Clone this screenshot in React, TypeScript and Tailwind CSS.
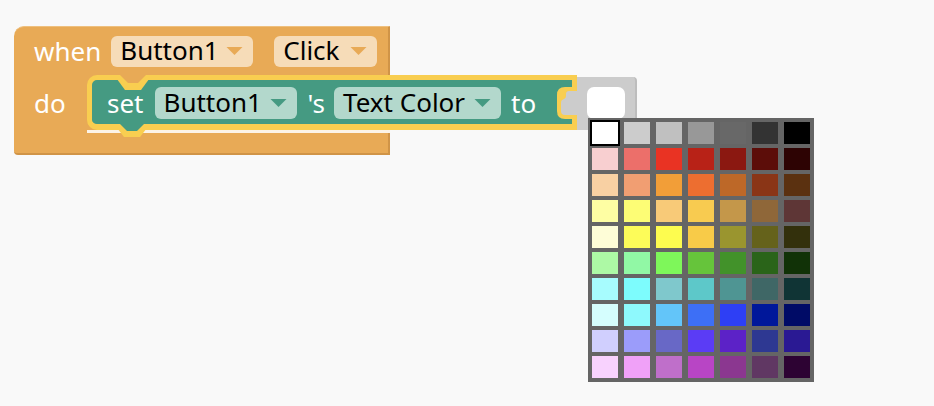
import React from "react";

const ORANGE = "#e8aa56";
const GREEN = "#459a82";

const PALETTE: string[][] = [
  ["#ffffff", "#cccccc", "#c0c0c0", "#989898", "#686868", "#333333", "#000000"],
  ["#f8cfd0", "#ec6f6a", "#e93323", "#b82217", "#8b1811", "#5c0d09", "#2d0303"],
  ["#f8d0a3", "#f19e72", "#f29e38", "#ed6e30", "#bd6828", "#8a3516", "#5b3110"],
  ["#fefea3", "#fdfd75", "#f8ca78", "#f8cb50", "#c4974a", "#8f6739", "#5e3636"],
  ["#fefdd7", "#fdfc59", "#fdfc4f", "#f8cb48", "#9a952f", "#65621b", "#33300c"],
  ["#adf9a5", "#91f8a5", "#7ef75a", "#66c43b", "#42922a", "#2a6419", "#113207"],
  ["#a7fcfe", "#7dfcfd", "#7fc8cc", "#5dc8c9", "#4f9593", "#3f6766", "#103435"],
  ["#d5fefe", "#8ef9fd", "#63c5f9", "#3d6ff6", "#2e3ff5", "#00179a", "#000b66"],
  ["#d0cffe", "#9b9cfa", "#6868c6", "#5b3cf5", "#5c22c7", "#2e3892", "#2a1993"],
  ["#f8d2fe", "#f0a1f8", "#bf6fca", "#b845c5", "#8b3790", "#603763", "#2d0333"],
];

function Arrow({ color }: { color: string }) {
  return (
    <svg width="17" height="8" viewBox="0 0 17 8" className="shrink-0">
      <path d="M0.5 0 H16.5 L8.5 8 Z" fill={color} />
    </svg>
  );
}

interface FieldProps {
  label: string;
  width: string;
  tone: "orange" | "green";
  className?: string;
}

function Field({ label, width, tone, className = "" }: FieldProps) {
  const look = tone === "orange" ? "bg-[#f6dcb8] h-[31px]" : "bg-[#b3d8cc] h-[32px]";
  return (
    <div
      className={`flex items-center shrink-0 pl-[9px] pr-[10px] pb-[2px] rounded-[6px] text-black ${look} ${width} ${className}`}
    >
      <span>{label}</span>
      <span className="ml-auto pt-[2px]">
        <Arrow color={tone === "orange" ? ORANGE : GREEN} />
      </span>
    </div>
  );
}

function SetBlock() {
  return (
    <div className="relative w-[490px] h-[55px] bg-[#459a82] border-[5px] border-b-[6px] border-[#f9ce50] rounded-l-[10px] flex items-center pl-[15px] pt-[2px] text-white">
      <span className="mr-[11px]">set</span>
      <Field label="Button1" width="w-[142px]" tone="green" className="mr-[11px]" />
      <span className="mr-[9px]">'s</span>
      <Field label="Text Color" width="w-[167px]" tone="green" className="mr-[10px]" />
      <span>to</span>

      {/* previous-connection notch */}
      <svg width="40" height="15" viewBox="0 0 40 15" className="absolute left-[21px] top-[-5px]">
        <path d="M1 0 H39 L28 15 H12 Z" fill="#f9ce50" />
        <path d="M7 0 H33 L25 8 H15 Z" fill={ORANGE} />
      </svg>

      {/* next-connection tab */}
      <svg width="36" height="14" viewBox="0 0 36 14" className="absolute left-[22px] top-[44px]">
        <path d="M0 0 H36 L26 13 H10 Z" fill="#f9ce50" />
        <path d="M6 0 H30 L23 7 H13 Z" fill={GREEN} />
      </svg>

      {/* value socket */}
      <svg width="24" height="36" viewBox="0 0 24 36" className="absolute left-[463px] top-[5px] overflow-visible">
        <path d="M24 2 H10 Q2 2 2 10 V26 Q2 34 10 34 H24 Z" fill="#f9ce50" />
        <path d="M24 6 H14 Q11 6 11 9 V11 C11 15 6 13 6 18 V26 Q6 30 10 30 H24 Z" fill="#cccccc" />
      </svg>
    </div>
  );
}

function EventBlock() {
  return (
    <div className="absolute left-[14px] top-[26px] text-white">
      <div className="flex items-center w-[376px] h-[49px] pl-[20px] bg-[#e8aa56] rounded-tl-[10px] border-t border-t-[#efc07e] border-r-2 border-r-[#d09447]">
        <span className="mr-[10px]">when</span>
        <Field label="Button1" width="w-[142px]" tone="orange" />
        <Field label="Click" width="w-[103px]" tone="orange" className="ml-[21px]" />
      </div>
      <div className="flex w-[376px] h-[58px] bg-[#e8aa56]">
        <div className="w-[73px] shrink-0 flex items-center pl-[20px] pb-[3px]">do</div>
        <div className="flex flex-col shrink-0">
          <SetBlock />
          <div className="w-[303px] h-[3px] bg-[#fcf3e6]" />
        </div>
      </div>
      <div className="w-[376px] h-[22px] bg-[#e8aa56] rounded-bl-[4px] border-b-2 border-r-2 border-[#d09447]" />
    </div>
  );
}

function ColorBlock() {
  return (
    <div className="absolute left-[577px] top-[77px] w-[60px] h-[53px] bg-[#cccccc] rounded-r-[4px] border-r-2 border-[#bdbdbd] pl-[10px] pt-[10px]">
      <div className="w-[38px] h-[32px] bg-white rounded-[7px]" />
    </div>
  );
}

function Palette() {
  return (
    <div className="absolute left-[588px] top-[118px] w-[226px] h-[264px] bg-[#656565] p-[4px] grid grid-cols-[repeat(7,26px)] auto-rows-[22px] gap-x-[6px] gap-y-[4px]">
      {PALETTE.flat().map((c, i) => (
        <div
          key={i}
          className={i === 0 ? "ring-2 ring-black" : ""}
          style={{ backgroundColor: c }}
        />
      ))}
    </div>
  );
}

export default function App() {
  return (
    <div className="relative w-full h-[406px] bg-[#f9f9f9] overflow-hidden font-['Noto_Sans',sans-serif] text-[26px] leading-none">
      <EventBlock />
      <ColorBlock />
      <Palette />
    </div>
  );
}
